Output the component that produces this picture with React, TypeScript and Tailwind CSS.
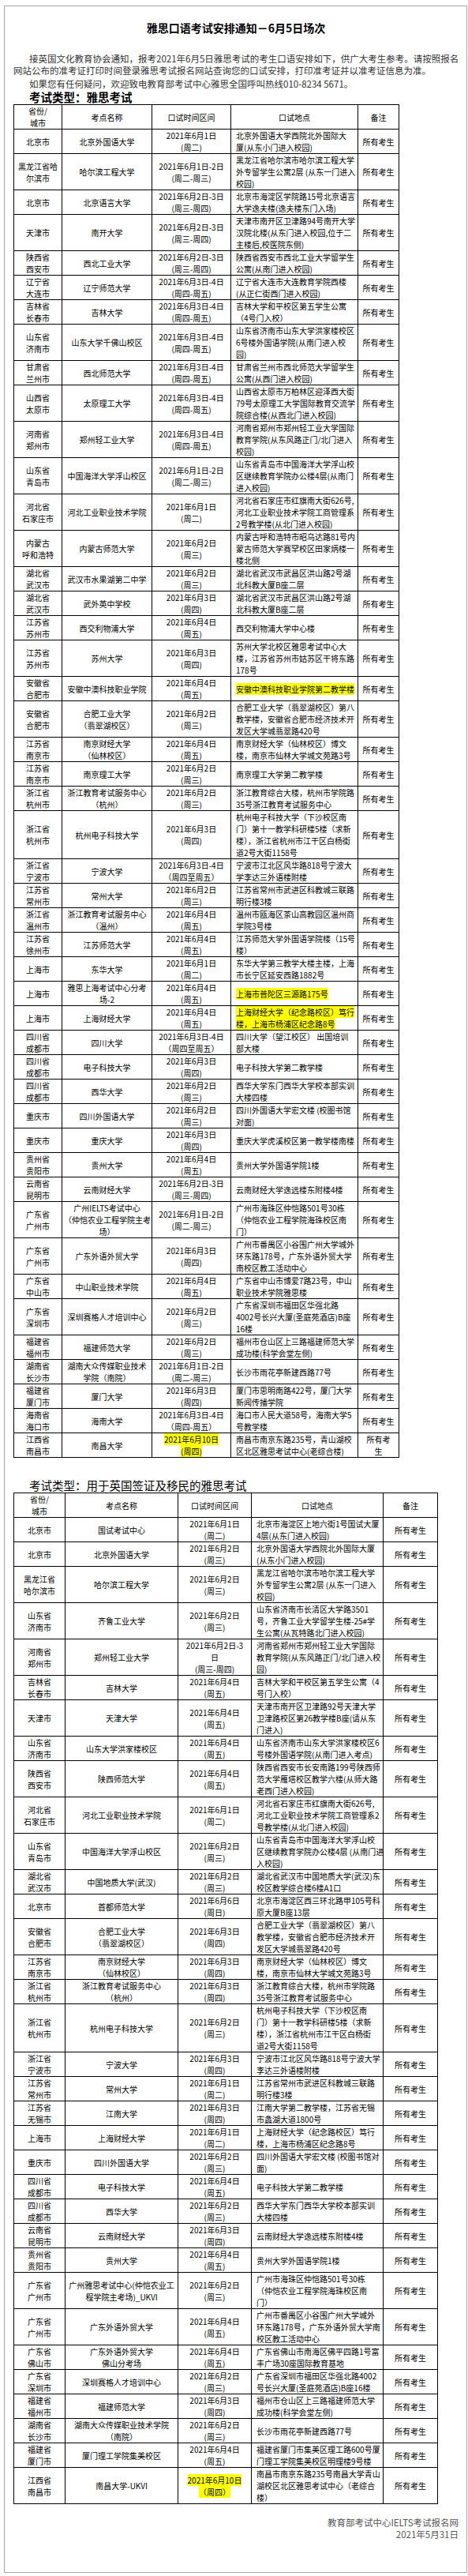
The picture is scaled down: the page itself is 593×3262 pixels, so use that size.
import React, { Fragment } from "react";

type Row = string[];

const T1: Row[] = [
  ["北京市", "北京外国语大学", "2021年6月1日|(周二)", "北京外国语大学西院北外国际大|厦(从东小门进入校园)"],
  ["黑龙江省哈|尔滨市", "哈尔滨工程大学", "2021年6月1日-2日|(周二-周三)", "黑龙江省哈尔滨市哈尔滨工程大学|外专留学生公寓2层 (从东一门进入|校园)"],
  ["北京市", "北京语言大学", "2021年6月2日-3日|(周三-周四)", "北京市海淀区学院路15号北京语言|大学逸夫楼(逸夫楼东门入场)"],
  ["天津市", "南开大学", "2021年6月2日-3日|(周三-周四)", "天津市南开区卫津路94号南开大学|汉院北楼(从东门进入校园,位于二|主楼后,校医院东侧)"],
  ["陕西省|西安市", "西北工业大学", "2021年6月2日-3日|(周三-周四)", "陕西省西安市西北工业大学留学生|公寓(从南门进入校园)"],
  ["辽宁省|大连市", "辽宁师范大学", "2021年6月3日-4日|(周四-周五)", "辽宁省大连市大连教育学院西楼|(从正仁街西门进入校园)"],
  ["吉林省|长春市", "吉林大学", "2021年6月3日-4日|(周四-周五)", "吉林大学和平校区第五学生公寓|（4号门入校）"],
  ["山东省|济南市", "山东大学千佛山校区", "2021年6月3日-4日|(周四-周五)", "山东省济南市山东大学洪家楼校区|6号楼外国语学院(从南门进入校|园)"],
  ["甘肃省|兰州市", "西北师范大学", "2021年6月3日-4日|(周四-周五)", "甘肃省兰州市西北师范大学留学生|公寓(从西门进入校园)"],
  ["山西省|太原市", "太原理工大学", "2021年6月3日-4日|(周四-周五)", "山西省太原市万柏林区迎泽西大街|79号太原理工大学国际教育交流学|院综合楼(从西北门进入校园)"],
  ["河南省|郑州市", "郑州轻工业大学", "2021年6月3日-4日|(周四-周五)", "河南省郑州市郑州轻工业大学国际|教育学院(从东风路正门/北门进入|校园)"],
  ["山东省|青岛市", "中国海洋大学浮山校区", "2021年6月1日-2日|(周二-周三)", "山东省青岛市中国海洋大学浮山校|区继续教育学院办公楼4层(从南门|进入校园)"],
  ["河北省|石家庄市", "河北工业职业技术学院", "2021年6月1日|(周二)", "河北省石家庄市红旗南大街626号,|河北工业职业技术学院工商管理系|2号教学楼(从北门进入校园)"],
  ["内蒙古|呼和浩特", "内蒙古师范大学", "2021年6月2日|(周三)", "内蒙古呼和浩特市昭乌达路81号内|蒙古师范大学赛罕校区田家炳楼一|楼北侧"],
  ["湖北省|武汉市", "武汉市水果湖第二中学", "2021年6月2日|(周三)", "湖北省武汉市武昌区洪山路2号湖|北科教大厦B座二层"],
  ["湖北省|武汉市", "武外英中学校", "2021年6月3日|(周四)", "湖北省武汉市武昌区洪山路2号湖|北科教大厦B座二层"],
  ["江苏省|苏州市", "西交利物浦大学", "2021年6月4日|(周五)", "西交利物浦大学中心楼"],
  ["江苏省|苏州市", "苏州大学", "2021年6月3日|(周四)", "苏州大学北校区雅思考试中心大|楼，江苏省苏州市姑苏区干将东路|178号"],
  ["安徽省|合肥市", "安徽中澳科技职业学院", "2021年6月4日|(周五)", "!安徽中澳科技职业学院第二教学楼"],
  ["安徽省|合肥市", "合肥工业大学|（翡翠湖校区）", "2021年6月2日|(周三)", "合肥工业大学（翡翠湖校区）第八|教学楼，安徽省合肥市经济技术开|发区大学城翡翠路420号"],
  ["江苏省|南京市", "南京财经大学|（仙林校区）", "2021年6月4日|(周五)", "南京财经大学（仙林校区）博文|楼，南京市仙林大学城文苑路3号"],
  ["江苏省|南京市", "南京理工大学", "2021年6月2日|(周三)", "南京理工大学第二教学楼"],
  ["浙江省|杭州市", "浙江教育考试服务中心|（杭州）", "2021年6月2日|(周三)", "浙江教育综合大楼，杭州市学院路|35号浙江教育考试服务中心"],
  ["浙江省|杭州市", "杭州电子科技大学", "2021年6月3日|(周四)", "杭州电子科技大学（下沙校区南|门）第十一教学科研楼5楼（求新|楼），浙江省杭州市江干区白杨街|道2号大街1158号"],
  ["浙江省|宁波市", "宁波大学", "2021年6月3日-4日|（周四至周五）", "宁波市江北区风华路818号宁波大|学李达三外语楼附楼"],
  ["江苏省|常州市", "常州大学", "2021年6月2日|(周三)", "江苏省常州市武进区科教城三联路|明行楼3楼"],
  ["浙江省|温州市", "浙江教育考试服务中心|（温州）", "2021年6月4日|(周五)", "温州市瓯海区茶山高教园区温州商|学院3号楼"],
  ["江苏省|徐州市", "江苏师范大学", "2021年6月4日|(周五)", "江苏师范大学外国语学院楼（15号|楼）"],
  ["上海市", "东华大学", "2021年6月1日|(周二)", "东华大学第三教学大楼主楼，上海|市长宁区延安西路1882号"],
  ["上海市", "雅思上海考试中心分考|场-2", "2021年6月4日|(周五)", "!上海市普陀区三源路175号"],
  ["上海市", "上海财经大学", "2021年6月4日|(周五)", "!上海财经大学（纪念路校区）笃行|楼，上海市杨浦区纪念路8号"],
  ["四川省|成都市", "四川大学", "2021年6月3日-4日|（周四至周五）", "四川大学（望江校区） 出国培训|部大楼"],
  ["四川省|成都市", "电子科技大学", "2021年6月3日|(周四)", "电子科技大学第二教学楼"],
  ["四川省|成都市", "西华大学", "2021年6月2日|(周三)", "西华大学东门西华大学校本部实训|大楼四楼"],
  ["重庆市", "四川外国语大学", "2021年6月2日|(周三)", "四川外国语大学宏文楼 (校图书馆|对面)"],
  ["重庆市", "重庆大学", "2021年6月3日|(周四)", "重庆大学虎溪校区第一教学楼南楼"],
  ["贵州省|贵阳市", "贵州大学", "2021年6月4日|(周五)", "贵州大学外国语学院1楼"],
  ["云南省|昆明市", "云南财经大学", "2021年6月2日-3日|(周三-周四)", "云南财经大学逸远楼东附楼4楼"],
  ["广东省|广州市", "广州IELTS考试中心|（仲恺农业工程学院主考|场）", "2021年6月1日-2日|(周二-周三)", "广州市海珠区仲恺路501号30栋|（仲恺农业工程学院海珠校区南|门）"],
  ["广东省|广州市", "广东外语外贸大学", "2021年6月3日|(周四)", "广州市番禺区小谷围广州大学城外|环东路178号，广东外语外贸大学|南校区教工活动中心"],
  ["广东省|中山市", "中山职业技术学院", "2021年6月4日|(周五)", "广东省中山市博爱7路23号，中山|职业技术学院雅思楼"],
  ["广东省|深圳市", "深圳赛格人才培训中心", "2021年6月2日|(周三)", "广东省深圳市福田区华强北路|4002号长兴大厦(圣庭苑酒店)B座|16楼"],
  ["福建省|福州市", "福建师范大学", "2021年6月2日|(周三)", "福州市仓山区上三路福建师范大学|成功楼(科学会堂左侧)"],
  ["湖南省|长沙市", "湖南大众传媒职业技术|学院（南院）", "2021年6月1日-2日|(周二-周三)", "长沙市雨花亭新建西路77号"],
  ["福建省|厦门市", "厦门大学", "2021年6月3日|(周四)", "厦门市思明南路422号，厦门大学|新闻传播学院"],
  ["海南省|海口市", "海南大学", "2021年6月3日-4日|（周四-周五）", "海口市人民大道58号，海南大学5|号教学楼"],
  ["江西省|南昌市", "南昌大学", "!2021年6月10日|(周四)", "南昌市南京东路235号，青山湖校|区北区雅思考试中心(老综合楼)", "所有考|生"],
];

const T2: Row[] = [
  ["北京市", "国试考试中心", "2021年6月1日|(周二)", "北京市海淀区上地六街1号国试大厦|4层(从东门进入校园)"],
  ["北京市", "北京外国语大学", "2021年6月2日|(周三)", "北京外国语大学西院北外国际大厦|(从东小门进入校园)"],
  ["黑龙江省|哈尔滨市", "哈尔滨工程大学", "2021年6月2日|(周三)", "黑龙江省哈尔滨市哈尔滨工程大学|外专留学生公寓2层 (从东一门进入|校园)"],
  ["山东省|济南市", "齐鲁工业大学", "2021年6月2日|(周三)", "山东省济南市长清区大学路3501|号，齐鲁工业大学留学生楼-25#学|生公寓(从瓦特路北门进入校园)"],
  ["河南省|郑州市", "郑州轻工业大学", "2021年6月2日-3|日|(周三-周四)", "河南省郑州市郑州轻工业大学国际|教育学院(从东风路正门/北门进入校|园)"],
  ["吉林省|长春市", "吉林大学", "2021年6月4日|(周五)", "吉林大学和平校区第五学生公寓（4|号门入校）"],
  ["天津市", "天津大学", "2021年6月4日|(周五)", "天津市南开区卫津路92号天津大学|卫津路校区第26教学楼B座(请从东|门进入)"],
  ["山东省|济南市", "山东大学洪家楼校区", "2021年6月4日|(周五)", "山东省济南市山东大学洪家楼校区6|号楼外国语学院(从南门进入考点)"],
  ["陕西省|西安市", "陕西师范大学", "2021年6月4日|(周五)", "陕西省西安市长安南路199号陕西师|范大学雁塔校区教学六楼(从师大路|老西门进入校园)"],
  ["河北省|石家庄市", "河北工业职业技术学院", "2021年6月1日|(周二)", "河北省石家庄市红旗南大街626号,|河北工业职业技术学院工商管理系2|号教学楼(从北门进入校园)"],
  ["山东省|青岛市", "中国海洋大学浮山校区", "2021年6月2日|(周三)", "山东省青岛市中国海洋大学浮山校|区继续教育学院办公楼4层 (从南门进|入校园)"],
  ["湖北省|武汉市", "中国地质大学(武汉)", "2021年6月2日|(周三)", "湖北省武汉市中国地质大学(武汉)东|校区教学综合楼6楼A1口"],
  ["北京市", "首都师范大学", "2021年6月6日|(周日)", "北京市海淀区西三环北路甲105号科|原大厦B座13层"],
  ["安徽省|合肥市", "合肥工业大学|（翡翠湖校区）", "2021年6月3日|(周四)", "合肥工业大学（翡翠湖校区）第八|教学楼，安徽省合肥市经济技术开|发区大学城翡翠路420号"],
  ["江苏省|南京市", "南京财经大学|（仙林校区）", "2021年6月3日|(周四)", "南京财经大学（仙林校区）博文|楼，南京市仙林大学城文苑路3号"],
  ["浙江省|杭州市", "浙江教育考试服务中心|（杭州）", "2021年6月3日|(周四)", "浙江教育综合大楼，杭州市学院路|35号浙江教育考试服务中心"],
  ["浙江省|杭州市", "杭州电子科技大学", "2021年6月2日|(周三)", "杭州电子科技大学（下沙校区南|门）第十一教学科研楼5楼（求新|楼），浙江省杭州市江干区白杨街|道2号大街1158号"],
  ["浙江省|宁波市", "宁波大学", "2021年6月3日|(周四)", "宁波市江北区风华路818号宁波大学|李达三外语楼附楼"],
  ["江苏省|常州市", "常州大学", "2021年6月1日|(周二)", "江苏省常州市武进区科教城三联路|明行楼3楼"],
  ["江苏省|无锡市", "江南大学", "2021年6月3日|(周四)", "江南大学第二教学楼，江苏省无锡|市蠡湖大道1800号"],
  ["上海市", "上海财经大学", "2021年6月1日|(周二)", "上海财经大学（纪念路校区）笃行|楼，上海市杨浦区纪念路8号"],
  ["重庆市", "四川外国语大学", "2021年6月2日|(周三)", "四川外国语大学宏文楼 (校图书馆对|面)"],
  ["四川省|成都市", "电子科技大学", "2021年6月4日|(周五)", "电子科技大学第二教学楼"],
  ["四川省|成都市", "西华大学", "2021年6月2日|(周三)", "西华大学东门西华大学校本部实训|大楼四楼"],
  ["云南省|昆明市", "云南财经大学", "2021年6月3日|(周四)", "云南财经大学逸远楼东附楼4楼"],
  ["贵州省|贵阳市", "贵州大学", "2021年6月4日|(周五)", "贵州大学外国语学院1楼"],
  ["广东省|广州市", "广州雅思考试中心(仲恺农业工|程学院主考场)_UKVI", "2021年6月2日|(周三)", "广州市海珠区仲恺路501号30栋|（仲恺农业工程学院海珠校区南|门）"],
  ["广东省|广州市", "广东外语外贸大学", "2021年6月4日|(周五)", "广州市番禺区小谷围广州大学城外|环东路178号，广东外语外贸大学南|校区教工活动中心"],
  ["广东省|佛山市", "广东外语外贸大学|佛山分考场", "2021年6月4日|(周五)", "广东省佛山市南海区佛平四路1号富|丰广场30座国际教育基地"],
  ["广东省|深圳市", "深圳赛格人才培训中心", "2021年6月2日|(周三)", "广东省深圳市福田区华强北路4002|号长兴大厦(圣庭苑酒店)B座16楼"],
  ["福建省|福州市", "福建师范大学", "2021年6月3日|(周四)", "福州市仓山区上三路福建师范大学|成功楼(科学会堂左侧)"],
  ["湖南省|长沙市", "湖南大众传媒职业技术学院|（南院）", "2021年6月2日|(周三)", "长沙市雨花亭新建西路77号"],
  ["福建省|厦门市", "厦门理工学院集美校区", "2021年6月4日|(周五)", "福建省厦门市集美区理工路600号厦|门理工学院集美校区明理楼9号楼"],
  ["江西省|南昌市", "南昌大学-UKVI", "!2021年6月10日|（周四）", "南昌市南京东路235号南昌大学青山|湖校区北区雅思考试中心（老综合|楼）"],
];

const HEADER: Row = ["省份/|城市", "考点名称", "口试时间区间", "口试地点", "备注"];

function Lines({ text }: { text: string }) {
  const hl = text.startsWith("!");
  const t = hl ? text.slice(1) : text;
  const parts = t.split("|");
  const content = parts.map((l, i) => (
    <Fragment key={i}>
      {i > 0 && <br />}
      {l}
    </Fragment>
  ));
  if (hl) return <span className="bg-[#ffff00]">{content}</span>;
  return <>{content}</>;
}

function Table({ rows, widths }: { rows: Row[]; widths: "a" | "b" }) {
  const all = [HEADER, ...rows];
  return (
    <table
      className={
        widths === "a"
          ? "table-fixed border-collapse w-[488px] text-[10px] leading-[15px] text-black"
          : "table-fixed border-collapse w-[537px] text-[10px] leading-[15px] text-black"
      }
    >
      {widths === "a" ? (
        <colgroup>
          <col className="w-[61px]" />
          <col className="w-[114px]" />
          <col className="w-[100px]" />
          <col className="w-[161px]" />
          <col className="w-[52px]" />
        </colgroup>
      ) : (
        <colgroup>
          <col className="w-[65px]" />
          <col className="w-[143px]" />
          <col className="w-[93px]" />
          <col className="w-[167px]" />
          <col className="w-[69px]" />
        </colgroup>
      )}
      <tbody>
        {all.map((r, ri) => (
          <tr key={ri}>
            <td className="border border-black px-[2px] py-0 text-center align-middle whitespace-nowrap">
              <Lines text={r[0]} />
            </td>
            <td className="border border-black px-[2px] py-0 text-center align-middle whitespace-nowrap">
              <Lines text={r[1]} />
            </td>
            <td className="border border-black px-[2px] py-0 text-center align-middle whitespace-nowrap">
              <Lines text={r[2]} />
            </td>
            <td
              className={
                ri === 0
                  ? "border border-black px-[2px] py-0 text-center align-middle whitespace-nowrap"
                  : "border border-black pl-[6px] pr-[2px] py-0 text-left align-middle whitespace-nowrap"
              }
            >
              <Lines text={r[3]} />
            </td>
            <td className="border border-black px-[2px] py-0 text-center align-middle whitespace-nowrap">
              <Lines text={r[4] ?? "所有考生"} />
            </td>
          </tr>
        ))}
      </tbody>
    </table>
  );
}

export default function App() {
  return (
    <div
      className="w-[593px] bg-white pt-[7px] pb-[4px]"
      style={{ fontFamily: '"Noto Sans CJK SC", "Noto Sans", sans-serif' }}
    >
      <div className="ml-[5px] w-[587px] border border-[#a6a6a6] pl-[11px] pr-[10px] pb-[40px]">
        <h1 className="mt-[17px] h-[20px] text-center text-[14px] font-bold leading-[20px] text-black">
          雅思口语考试安排通知－6月5日场次
        </h1>
        <p className="mt-[22px] indent-[20px] text-[11.5px] leading-[15px] text-[#333333] whitespace-nowrap">
          接英国文化教育协会通知，报考2021年6月5日雅思考试的考生口语安排如下，供广大考生参考。请按照报名
          <br />
          网站公布的准考证打印时间登录雅思考试报名网站查询您的口试安排，打印准考证并以准考证信息为准。
        </p>
        <p className="mt-[2px] indent-[20px] text-[11.5px] leading-[15px] text-[#333333]">
          如果您有任何疑问，欢迎致电教育部考试中心雅思全国呼叫热线010-8234 5671。
        </p>
        <h2 className="h-[18px] pl-[20px] text-[14.5px] font-semibold leading-[18px] text-black">
          考试类型：雅思考试
        </h2>
        <Table rows={T1} widths="a" />
        <h2 className="mt-[26px] h-[18px] pl-[20px] text-[14.5px] font-normal leading-[18px] text-black">
          考试类型：用于英国签证及移民的雅思考试
        </h2>
        <Table rows={T2} widths="b" />
        <div className="mt-[16px] text-right text-[11.5px] leading-[15px] text-[#555555]">
          教育部考试中心IELTS考试报名网
          <br />
          2021年5月31日
        </div>
      </div>
    </div>
  );
}
